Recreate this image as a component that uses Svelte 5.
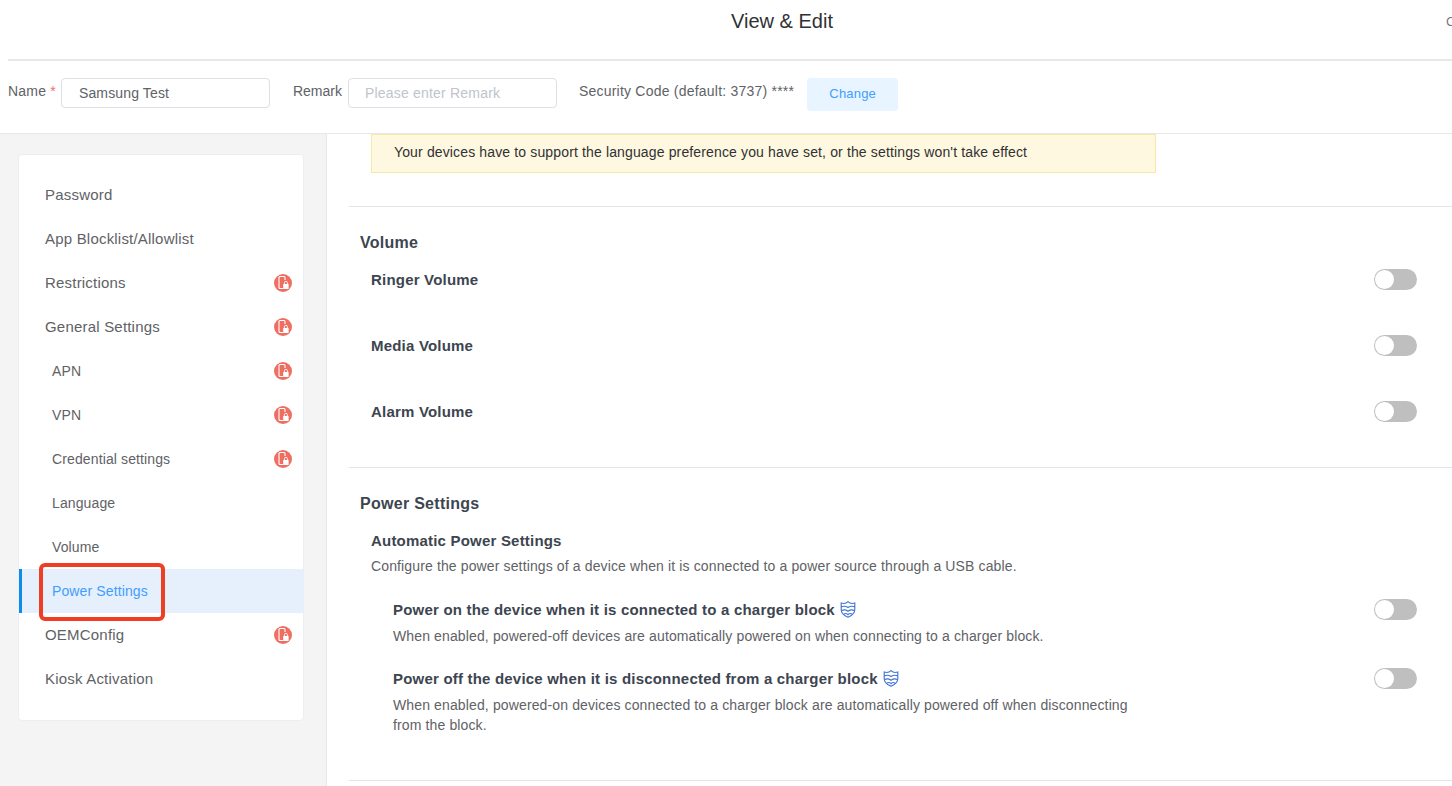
<script>
	const menu = [
		{ label: 'Password' },
		{ label: 'App Blocklist/Allowlist' },
		{ label: 'Restrictions', locked: true },
		{ label: 'General Settings', locked: true },
		{ label: 'APN', sub: true, locked: true },
		{ label: 'VPN', sub: true, locked: true },
		{ label: 'Credential settings', sub: true, locked: true },
		{ label: 'Language', sub: true },
		{ label: 'Volume', sub: true },
		{ label: 'Power Settings', sub: true, active: true },
		{ label: 'OEMConfig', locked: true },
		{ label: 'Kiosk Activation' }
	];
	const volumes = ['Ringer Volume', 'Media Volume', 'Alarm Volume'];
</script>

{#snippet toggle()}
	<span class="toggle"><span class="knob"></span></span>
{/snippet}

{#snippet shield()}
	<svg class="shield" viewBox="1.4 0.6 13.2 15" width="16" height="17" fill="none" stroke="#3f74d6" stroke-width="1">
		<path d="M2 2.4 C4 3 6.4 2.8 8 1.2 C9.6 2.8 12 3 14 2.4 V8 C14 11 11 13.6 8 15 C5 13.6 2 11 2 8 Z" />
		<path d="M2 5.8 C4.5 4.8 6 5 8 6.4 C10 5 11.5 4.8 14 5.8" />
		<path d="M2.4 9 C4.5 8 6 8.2 8 9.6 C10 8.2 11.5 8 13.6 9" />
		<path d="M4.5 12 C5.8 11.4 7 11.6 8 12.6 C9 11.6 10.2 11.4 11.5 12" />
	</svg>
{/snippet}

<div class="page">
	<header class="title-bar">
		<h1>View &amp; Edit</h1>
		<span class="close">C</span>
	</header>

	<div class="form-row">
		<label class="name-label" for="name">Name <i>*</i></label>
		<input id="name" class="name-input" value="Samsung Test" />
		<label class="remark-label" for="remark">Remark</label>
		<input id="remark" class="remark-input" placeholder="Please enter Remark" />
		<span class="code">Security Code (default: 3737) ****</span>
		<button class="change">Change</button>
	</div>

	<div class="body">
		<aside class="side">
			<nav class="card">
				{#each menu as item}
					<div class="item" class:sub={item.sub} class:active={item.active}>
						<span>{item.label}</span>
						{#if item.locked}
							<svg class="lock" viewBox="0 0 18 18" width="18" height="18">
								<circle cx="9" cy="9" r="9" fill="#ee6f62" />
								<path d="M9 14.5 H6 a1 1 0 0 1 -1 -1 V3.5 a1 1 0 0 1 1 -1 H10 a1 1 0 0 1 1 1 V6" fill="none" stroke="#fff" stroke-width="1.1" />
								<rect x="9.2" y="10" width="5.4" height="5" rx="0.5" fill="#fff" />
								<path d="M10.4 10 V8.8 a1.5 1.5 0 0 1 3 0 V10" fill="none" stroke="#fff" stroke-width="0.9" />
							</svg>
						{/if}
					</div>
				{/each}
			</nav>
		</aside>

		<main class="content">
			<div class="notice">Your devices have to support the language preference you have set, or the settings won't take effect</div>

			<section class="volume">
				<h2>Volume</h2>
				{#each volumes as v}
					<div class="vol-row">
						<b>{v}</b>
						{@render toggle()}
					</div>
				{/each}
			</section>

			<section class="power">
				<h2>Power Settings</h2>
				<div class="auto">
					<b>Automatic Power Settings</b>
					<p>Configure the power settings of a device when it is connected to a power source through a USB cable.</p>
				</div>
				<div class="opt first">
					<div class="opt-head">
						<b>Power on the device when it is connected to a charger block</b>
						{@render shield()}
						{@render toggle()}
					</div>
					<p>When enabled, powered-off devices are automatically powered on when connecting to a charger block.</p>
				</div>
				<div class="opt">
					<div class="opt-head">
						<b>Power off the device when it is disconnected from a charger block</b>
						{@render shield()}
						{@render toggle()}
					</div>
					<p>When enabled, powered-on devices connected to a charger block are automatically powered off when disconnecting from the block.</p>
				</div>
			</section>
		</main>
	</div>

	<div class="callout"></div>
</div>

<style>
	:global(body) {
		margin: 0;
		background: #fff;
		font-family: 'Liberation Sans', Arial, sans-serif;
	}

	.page {
		position: relative;
		width: 1452px;
		height: 786px;
		overflow: hidden;
		color: #606266;
		font-size: 14px;
	}

	.title-bar {
		position: relative;
		height: 59px;
		margin-left: 8px;
		border-bottom: 2px solid #e8e8e8;
		display: flex;
		justify-content: center;
		overflow: hidden;
	}

	h1 {
		margin: 9px 0 0 104px;
		font-size: 20px;
		font-weight: 400;
		line-height: 24px;
		color: #303133;
	}

	.close {
		position: absolute;
		left: 1438px;
		top: 14px;
		color: #777;
		font-size: 13px;
	}

	.form-row {
		height: 55px;
		border-bottom: 1px solid #e8e8e8;
		display: flex;
		align-items: flex-start;
		padding-left: 8px;
		padding-top: 17px;
	}

	.form-row label {
		line-height: 26px;
		color: #606266;
	}

	.form-row i {
		color: #f56c6c;
		font-style: normal;
	}

	.name-label {
		letter-spacing: 0.2px;
	}

	input {
		box-sizing: border-box;
		width: 209px;
		height: 30px;
		border: 1px solid #dcdfe6;
		border-radius: 4px;
		padding: 0 17px;
		font: 14px 'Liberation Sans', Arial, sans-serif;
		letter-spacing: 0.15px;
		color: #606266;
		outline: none;
	}

	input::placeholder {
		color: #c0c4cc;
		opacity: 1;
	}

	.name-input {
		margin-left: 5px;
	}

	.remark-label {
		margin-left: 23px;
	}

	.remark-input {
		margin-left: 6px;
		padding-left: 16px;
		letter-spacing: 0.2px;
	}

	.code {
		margin-left: 22px;
		line-height: 26px;
		letter-spacing: 0.22px;
		color: #606266;
	}

	.change {
		margin-left: 13px;
		width: 91px;
		height: 33px;
		border: none;
		border-radius: 4px;
		padding: 0 0 3px;
		background: #e8f4ff;
		color: #409eff;
		font: 13px 'Liberation Sans', Arial, sans-serif;
		letter-spacing: 0.2px;
	}

	.body {
		display: flex;
		height: 652px;
	}

	.side {
		width: 327px;
		flex: none;
		box-sizing: border-box;
		background: #f4f4f4;
		border-right: 1px solid #e8e8e8;
		padding: 20px 22px 0 18px;
	}

	.card {
		box-sizing: border-box;
		width: 286px;
		height: 567px;
		background: #fff;
		border: 1px solid #ebeef5;
		border-radius: 4px;
		padding: 18px 0 0;
	}

	.item {
		box-sizing: border-box;
		height: 44px;
		display: flex;
		align-items: center;
		justify-content: space-between;
		padding: 0 11px 1px 26px;
		font-size: 15px;
		letter-spacing: 0.2px;
		color: #606266;
	}

	.item.sub {
		padding-left: 33px;
		padding-bottom: 0;
		font-size: 14px;
		letter-spacing: 0.12px;
	}

	.item.active {
		background: #e6effc;
		color: #409eff;
		border-left: 3px solid #0a8ee8;
		padding-left: 30px;
	}

	.content {
		flex: 1;
		min-width: 0;
		padding-left: 22px;
	}

	.notice {
		box-sizing: border-box;
		margin-left: 22px;
		width: 785px;
		height: 39px;
		line-height: 34px;
		padding-left: 22px;
		background: #fff8e1;
		border: 1px solid #f5e8a8;
		letter-spacing: 0.14px;
		color: #303133;
	}

	section {
		border-top: 1px solid #e4e4ec;
	}

	h2 {
		margin: 0;
		padding-left: 11px;
		font-size: 16px;
		line-height: 20px;
		font-weight: 700;
		letter-spacing: 0.28px;
		color: #3d4550;
	}

	b {
		font-size: 15px;
		font-weight: 700;
		letter-spacing: 0.2px;
		color: #3d4550;
	}

	.volume {
		margin-top: 33px;
		height: 261px;
		padding-top: 26px;
		box-sizing: border-box;
	}

	.vol-row {
		height: 66px;
		display: flex;
		justify-content: space-between;
		align-items: center;
		padding: 0 35px 0 22px;
	}

	.volume h2 + .vol-row {
		margin-top: -7px;
	}

	.toggle {
		position: relative;
		width: 43px;
		height: 21px;
		margin-top: 1px;
		border-radius: 11px;
		background: #bfbfbf;
		flex: none;
	}

	.knob {
		position: absolute;
		left: 1px;
		top: 1px;
		width: 19px;
		height: 19px;
		border-radius: 50%;
		background: #fff;
	}

	.power {
		height: 314px;
		box-sizing: border-box;
		padding-top: 26px;
		border-bottom: 1px solid #e4e4ec;
	}

	.auto {
		margin-top: 17px;
		padding-left: 22px;
	}

	.auto b {
		display: block;
		line-height: 20px;
	}

	p {
		margin: 0;
		line-height: 20px;
		letter-spacing: 0.13px;
		color: #606266;
	}

	.auto p {
		margin-top: 5px;
	}

	.opt {
		margin-top: 21px;
		padding: 0 35px 0 44px;
	}

	.opt.first {
		margin-top: 22px;
	}

	.opt-head {
		display: flex;
		align-items: center;
		height: 22px;
	}

	.opt-head .toggle {
		margin-left: auto;
		margin-top: 0;
	}

	.shield {
		margin-left: 5px;
	}

	.opt p {
		margin-top: 6px;
		max-width: 750px;
	}

	.callout {
		position: absolute;
		left: 39px;
		top: 563px;
		width: 118px;
		height: 50px;
		border: 4px solid #ee3f24;
		border-radius: 6px;
	}
</style>
